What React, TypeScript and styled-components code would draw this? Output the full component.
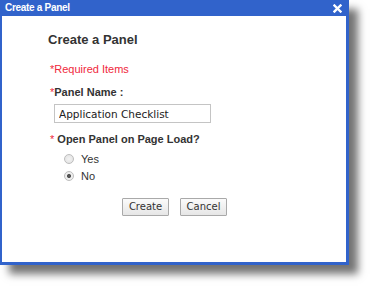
import React, { FC } from 'react'
import styled, { createGlobalStyle } from 'styled-components'

const BLUE = '#3163cb'

const GlobalStyle = createGlobalStyle`
  html, body {
    margin: 0;
    padding: 0;
    background: #fff;
  }
  body {
    font-family: 'Liberation Sans', Arial, sans-serif;
  }
`

export default function App() {
  return (
    <>
      <GlobalStyle />
      <StyledPage>
        <StyledDialog>
          <StyledTitleBar>
            <StyledTitle>Create a Panel</StyledTitle>
            <CloseIcon />
          </StyledTitleBar>
          <StyledBody>
            <StyledHeading>Create a Panel</StyledHeading>
            <StyledRequired>*Required Items</StyledRequired>
            <StyledLabel>
              <StyledStar>*</StyledStar>Panel Name :
            </StyledLabel>
            <StyledInput defaultValue="Application Checklist" />
            <StyledLabel>
              <StyledStar>* </StyledStar>Open Panel on Page Load?
            </StyledLabel>
            <StyledRadioGroup>
              <Radio label="Yes" />
              <Radio label="No" checked />
            </StyledRadioGroup>
            <StyledActions>
              <StyledButton>Create</StyledButton>
              <StyledButton>Cancel</StyledButton>
            </StyledActions>
          </StyledBody>
        </StyledDialog>
      </StyledPage>
    </>
  )
}

const CloseIcon: FC = () => (
  <StyledClose width="9" height="9" viewBox="0 0 9 9">
    <path d="M1.5 1.5 L7.5 7.5 M7.5 1.5 L1.5 7.5" stroke="#fff" strokeWidth="2.4" strokeLinecap="square" />
  </StyledClose>
)

const Radio: FC<{ label: string; checked?: boolean }> = ({ label, checked }) => (
  <StyledRadioRow>
    <StyledRadioDot $checked={!!checked} />
    <span>{label}</span>
  </StyledRadioRow>
)

const StyledPage = styled.div`
  width: 373px;
  height: 289px;
  overflow: hidden;
`

const StyledDialog = styled.div`
  width: 349px;
  height: 265px;
  box-sizing: border-box;
  border: 3px solid ${BLUE};
  border-top: none;
  border-left-width: 2px;
  background: #fff;
  display: flex;
  flex-direction: column;
  box-shadow: 9px 9px 8px rgba(0, 0, 0, 0.55);
`

const StyledTitleBar = styled.div`
  height: 16px;
  margin: 0 -3px 0 -2px;
  background: ${BLUE};
  display: flex;
  align-items: center;
  justify-content: space-between;
  padding: 0 7px 0 5px;
`

const StyledTitle = styled.span`
  color: #fff;
  font-size: 10px;
  font-weight: bold;
  letter-spacing: -0.3px;
  line-height: 16px;
`

const StyledClose = styled.svg`
  display: block;
`

const StyledBody = styled.div`
  padding: 16px 0 0 46px;
  display: flex;
  flex-direction: column;
  align-items: flex-start;
`

const StyledHeading = styled.h2`
  margin: 0;
  font-size: 13px;
  line-height: 16px;
  font-weight: bold;
  color: #333;
`

const StyledRequired = styled.div`
  margin: 15px 0 0 2px;
  font-size: 11px;
  line-height: 13px;
  color: #f0283c;
`

const StyledLabel = styled.div`
  margin: 10px 0 0 2px;
  font-size: 11px;
  line-height: 13px;
  font-weight: bold;
  color: #333;
`

const StyledStar = styled.span`
  color: #f0283c;
  font-weight: normal;
`

const StyledInput = styled.input`
  margin: 5px 0 0 6px;
  width: 157px;
  height: 19px;
  box-sizing: border-box;
  border: 1px solid #c4c4c4;
  padding: 0 4px;
  font-family: 'DejaVu Sans', Verdana, sans-serif;
  font-size: 10.5px;
  color: #222;
  outline: none;
`

const StyledRadioGroup = styled.div`
  margin: 6px 0 0 16px;
  display: flex;
  flex-direction: column;
  gap: 3px;
`

const StyledRadioRow = styled.label`
  display: flex;
  align-items: center;
  gap: 7px;
  font-size: 11px;
  line-height: 14px;
  color: #333;
`

const StyledRadioDot = styled.span<{ $checked: boolean }>`
  width: 8px;
  height: 8px;
  border-radius: 50%;
  border: 1px solid #bdbdbd;
  background: radial-gradient(circle, ${({ $checked }) => ($checked ? '#555 0 1.8px, #eee 2.3px' : '#f2f2f2 0, #e0e0e0 100%')});
`

const StyledActions = styled.div`
  margin: 15px 0 0 74px;
  display: flex;
  gap: 11px;
`

const StyledButton = styled.button`
  min-width: 47px;
  height: 18px;
  padding: 0 4px;
  border: 1px solid #a9a9a9;
  border-radius: 1px;
  background: linear-gradient(#fbfbfb, #e6e6e6);
  font-family: 'DejaVu Sans', Verdana, sans-serif;
  font-size: 10px;
  color: #333;
  line-height: 16px;
`
